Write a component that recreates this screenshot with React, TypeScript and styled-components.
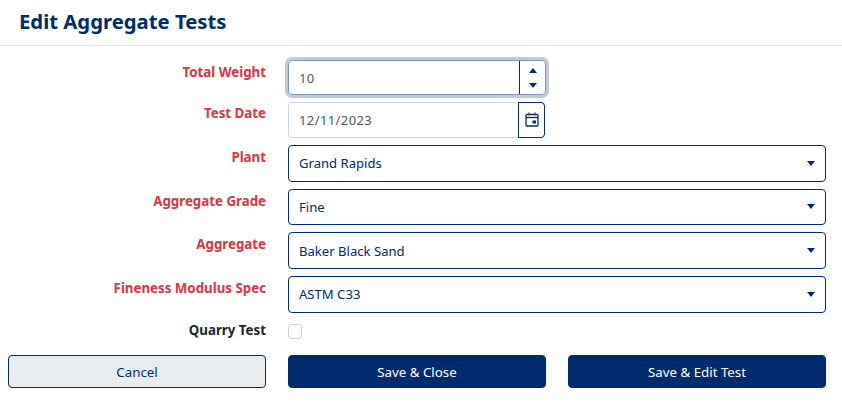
import React from "react";
import styled, { createGlobalStyle } from "styled-components";

const Global = createGlobalStyle`
  html, body { margin: 0; padding: 0; background: #fff; }
  body { font-family: "Noto Sans", "Open Sans", sans-serif; }
`;

const navy = "#002b6e";

const Page = styled.div`
  width: 842px;
  height: 403px;
  overflow: hidden;
  box-sizing: border-box;
`;
const Header = styled.header`
  height: 46px;
  box-sizing: border-box;
  border-bottom: 1px solid #dee2e6;
  padding: 6px 0 0 19px;
`;
const Title = styled.h1`
  margin: 0;
  font-size: 20.3px;
  line-height: 30px;
  font-weight: 700;
  color: ${navy};
`;
const Form = styled.form`
  display: grid;
  grid-template-columns: 258px 258px 258px;
  grid-template-rows: 42px 43px repeat(4, 43.67px) 35.33px 33px;
  column-gap: 22px;
  padding: 14px 16px 0 8px;
`;
const Label = styled.label<{ $optional?: boolean; $top?: number }>`
  grid-column: 1;
  justify-self: end;
  font-size: 13.3px;
  line-height: 18px;
  font-weight: 700;
  color: ${(p) => (p.$optional ? "#212529" : "#dc3545")};
  padding-top: ${(p) => p.$top ?? 3}px;
`;
const Field = styled.div<{ $wide?: boolean; $inset?: boolean }>`
  grid-column: ${(p) => (p.$wide ? "2 / 4" : "2")};
  display: flex;
  min-width: 0;
  padding-right: ${(p) => (p.$inset ? 1 : 0)}px;
`;
const Shell = styled.div<{ $focus?: boolean }>`
  flex: 1;
  height: ${(p) => (p.$focus ? 35 : 36)}px;
  display: flex;
  box-sizing: border-box;
  border-radius: 4px;
  border: 1px solid ${(p) => (p.$focus ? "#7f95b7" : "#ced4da")};
  box-shadow: ${(p) => (p.$focus ? "0 0 0 3px rgba(0,43,110,0.25)" : "none")};
`;
const Value = styled.div`
  flex: 1;
  padding-left: 10px;
  font-size: 13px;
  letter-spacing: 0.4px;
  line-height: 34px;
  color: #4f5962;
`;
const Spin = styled.div`
  width: 25px;
  border-left: 1px solid ${navy};
  display: flex;
  flex-direction: column;
  align-items: center;
  justify-content: center;
  gap: 10px;
`;
const CalButton = styled.div`
  width: 27px;
  margin: -1px -1px -1px 0;
  box-sizing: border-box;
  border: 1px solid ${navy};
  border-radius: 0 4px 4px 0;
  display: flex;
  align-items: center;
  justify-content: center;
  padding-bottom: 2px;
`;
const Select = styled.div`
  flex: 1;
  height: 36.67px;
  display: flex;
  align-items: center;
  justify-content: space-between;
  box-sizing: border-box;
  border: 1px solid ${navy};
  border-radius: 4px;
  padding: 0 10px;
  font-size: 13.1px;
  color: ${navy};
`;
const Box = styled.div`
  width: 14px;
  height: 15px;
  box-sizing: border-box;
  margin-top: 4px;
  border: 1px solid #ced4da;
  border-radius: 3px;
`;
const Button = styled.button<{ $primary?: boolean }>`
  height: 33px;
  box-sizing: border-box;
  padding: 1px 0 0;
  font-family: inherit;
  font-size: 13.3px;
  border: 1px solid ${navy};
  border-radius: 4px;
  color: ${(p) => (p.$primary ? "#fff" : navy)};
  background: ${(p) => (p.$primary ? navy : "#e9ecef")};
`;

const Tri = ({ up }: { up?: boolean }) => (
  <svg width="8" height="5" viewBox="0 0 8 5" style={{ display: "block" }}>
    <path d={up ? "M4 0L8 5H0z" : "M0 0h8L4 5z"} fill={navy} />
  </svg>
);

const Calendar = () => (
  <svg width="14" height="15" viewBox="0 0 14 15" fill="none">
    <rect x="1" y="2.5" width="12" height="11.5" rx="1" stroke={navy} strokeWidth="1.3" />
    <path d="M1 5.5h12" stroke={navy} strokeWidth="1.3" />
    <path d="M4 0.5v3M10 0.5v3" stroke="#8a2a4a" strokeWidth="1.4" />
    <rect x="7.5" y="8.5" width="3.5" height="3" fill={navy} />
  </svg>
);

const selects = [
  ["Plant", "Grand Rapids"],
  ["Aggregate Grade", "Fine"],
  ["Aggregate", "Baker Black Sand"],
  ["Fineness Modulus Spec", "ASTM C33"],
] as const;

export default function App() {
  return (
    <Page>
      <Global />
      <Header>
        <Title>Edit Aggregate Tests</Title>
      </Header>
      <Form>
        <Label>Total Weight</Label>
        <Field>
          <Shell $focus>
            <Value>10</Value>
            <Spin>
              <Tri up />
              <Tri />
            </Spin>
          </Shell>
        </Field>
        <Label $top={2}>Test Date</Label>
        <Field $inset>
          <Shell>
            <Value>12/11/2023</Value>
            <CalButton>
              <Calendar />
            </CalButton>
          </Shell>
        </Field>
        {selects.map(([label, value]) => (
          <React.Fragment key={label}>
            <Label>{label}</Label>
            <Field $wide>
              <Select>
                <span>{value}</span>
                <Tri />
              </Select>
            </Field>
          </React.Fragment>
        ))}
        <Label $optional $top={1.5}>Quarry Test</Label>
        <Field $wide>
          <Box />
        </Field>
        <Button type="button">Cancel</Button>
        <Button type="button" $primary>Save &amp; Close</Button>
        <Button type="button" $primary>Save &amp; Edit Test</Button>
      </Form>
    </Page>
  );
}
